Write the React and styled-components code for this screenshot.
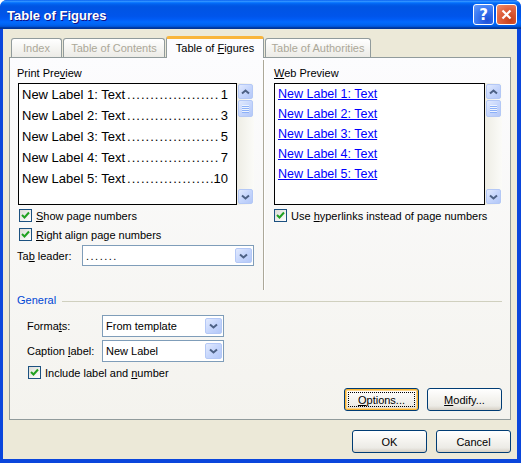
import styled, { createGlobalStyle } from "styled-components"

const GlobalStyle = createGlobalStyle`
  body {
    margin: 0;
    background: #ffffff;
    font-family: "Liberation Sans", Arial, sans-serif;
    font-size: 11px;
  }
`

const Window = styled.div`
  width: 521px;
  height: 463px;
  display: flex;
  flex-direction: column;
  background: #0a46dc;
  border-radius: 7px 7px 0 0;
  overflow: hidden;
`

const TitleBar = styled.div`
  height: 29px;
  flex: none;
  display: flex;
  align-items: center;
  padding: 0 4px 0 7px;
  background: linear-gradient(
    to bottom,
    #0058ee 0%,
    #3593ff 4%,
    #288eff 6%,
    #127dff 8%,
    #036ffc 10%,
    #0262ee 14%,
    #0057e5 20%,
    #0054e3 24%,
    #0055eb 56%,
    #005bf5 66%,
    #026afe 76%,
    #0062ef 86%,
    #0052d6 92%,
    #0040ab 94%,
    #003092 100%
  );
`

const Title = styled.div`
  flex: 1;
  color: #ffffff;
  font-weight: bold;
  font-size: 13px;
  text-shadow: 1px 1px 0 #0f1089;
  margin-top: 1px;
`

const CaptionButton = styled.div`
  width: 21px;
  height: 21px;
  box-sizing: border-box;
  border: 1px solid #ffffff;
  border-radius: 3px;
  margin-left: 2px;
  display: flex;
  align-items: center;
  justify-content: center;
  color: #ffffff;
  font-family: "DejaVu Sans", sans-serif;
  font-weight: bold;
  font-size: 15px;
  background: ${(p) =>
    p.$close
      ? "radial-gradient(circle at 70% 80%, #c8401a 0%, #e0623f 55%, #f0906c 100%)"
      : "radial-gradient(circle at 70% 80%, #1c4fd8 0%, #3d7cf4 60%, #6a9cf8 100%)"};
`

const Client = styled.div`
  flex: 1;
  margin: 0 4px 4px 3px;
  background: #ece9d8;
  padding: 7px 6px 0 6px;
  display: flex;
  flex-direction: column;
`

const TabRow = styled.div`
  height: 22px;
  display: flex;
  align-items: flex-end;
  gap: 1px;
  padding-left: 2px;
  margin-bottom: -1px;
  position: relative;
  z-index: 1;
`

const Tab = styled.div`
  width: ${(p) => p.$w}px;
  box-sizing: border-box;
  height: ${(p) => (p.$active ? 22 : 19)}px;
  margin-bottom: ${(p) => (p.$active ? 0 : 1)}px;
  border: 1px solid #919b9c;
  border-bottom: none;
  border-top: ${(p) => (p.$active ? "3px solid #f9b53b" : "1px solid #919b9c")};
  border-radius: 3px 3px 0 0;
  background: ${(p) =>
    p.$active ? "#fcfcfe" : "linear-gradient(#ffffff, #ecebe6)"};
  color: ${(p) => (p.$active ? "#000000" : "#aca899")};
  display: flex;
  align-items: center;
  justify-content: center;
  white-space: nowrap;
  padding-bottom: ${(p) => (p.$active ? 1 : 0)}px;
`

const Panel = styled.div`
  height: 363px;
  box-sizing: border-box;
  border: 1px solid #919b9c;
  background: linear-gradient(#fcfcfe, #f4f3ee);
  padding: 2px 8px 0 7px;
  display: flex;
  flex-direction: column;
`

const TopSection = styled.div`
  height: 230px;
  display: grid;
  grid-template-columns: 237px 1fr;
  column-gap: 9px;
`

const Column = styled.div`
  display: flex;
  flex-direction: column;
  ${(p) =>
    p.$divided &&
    `
    border-left: 1px solid #aca899;
    box-shadow: inset 1px 0 0 #ffffff;
    padding-left: 10px;
  `}
`

const FieldLabel = styled.div`
  margin-top: 7px;
  margin-bottom: 3px;
  line-height: 13px;
  color: #000000;
`

const PreviewWrap = styled.div`
  height: 122px;
  display: flex;
  margin-left: ${(p) => p.$inset || 0}px;
`

const PreviewBox = styled.div`
  flex: 1;
  min-width: 0;
  box-sizing: border-box;
  border: 1px solid #000000;
  background: #ffffff;
  padding: 0 8px 0 3px;
  overflow: hidden;
`

const PrintLine = styled.div`
  display: flex;
  line-height: 21px;
  font-size: 13px;
  color: #000000;
  white-space: nowrap;
`

const Leader = styled.span`
  flex: 1;
  min-width: 0;
  text-align: right;
  margin-left: 2px;
  letter-spacing: 1px;
`

const PageNum = styled.span`
  padding-left: ${(p) => (p.$pad ? 2 : 0)}px;
`

const WebLink = styled.div`
  line-height: 20px;
  font-size: 12.5px;
  color: #0000ff;
  text-decoration: underline;
  white-space: nowrap;
`

const ScrollBar = styled.div`
  width: 17px;
  flex: none;
  display: flex;
  flex-direction: column;
  align-items: center;
  padding: 1px 0;
  box-sizing: border-box;
  gap: 1px;
  background: linear-gradient(to right, #eeede5, #fbfbf8);
`

const ScrollButton = styled.div`
  width: 15px;
  height: ${(p) => p.$h || 15}px;
  box-sizing: border-box;
  border: 1px solid #b4c8f6;
  border-radius: 2px;
  background: linear-gradient(135deg, #e2eafe 0%, #c6d6fc 50%, #b4c8f8 100%);
  display: flex;
  align-items: center;
  justify-content: center;
  margin-top: ${(p) => (p.$bottom ? "auto" : "0")};
`

const CheckRow = styled.div`
  height: 19px;
  display: flex;
  align-items: center;
  margin-top: ${(p) => p.$mt || 0}px;
  padding-left: ${(p) => p.$indent || 0}px;
  color: #000000;
  white-space: nowrap;
`

const Box = styled.span`
  width: 13px;
  height: 13px;
  box-sizing: border-box;
  border: 1px solid #1c5180;
  background: linear-gradient(135deg, #dcdcd7, #ffffff);
  margin-right: 4px;
  display: flex;
  align-items: center;
  justify-content: center;
`

const LabeledRow = styled.div`
  display: flex;
  align-items: center;
  margin-top: ${(p) => p.$mt || 0}px;
  padding-left: ${(p) => p.$indent || 0}px;
`

const RowLabel = styled.div`
  width: ${(p) => p.$w}px;
  flex: none;
  color: #000000;
`

const Combo = styled.div`
  width: ${(p) => p.$w}px;
  height: ${(p) => p.$h || 21}px;
  box-sizing: border-box;
  border: 1px solid #7f9db9;
  background: #ffffff;
  display: flex;
  align-items: center;
  padding: 2px 1px 2px 3px;
  color: #000000;
`

const ComboText = styled.span`
  flex: 1;
  letter-spacing: ${(p) => (p.$spaced ? "1.5px" : "normal")};
`

const ComboButton = styled.div`
  width: 17px;
  align-self: stretch;
  box-sizing: border-box;
  border: 1px solid #b4c8f6;
  border-radius: 2px;
  background: linear-gradient(135deg, #e2eafe 0%, #c6d6fc 50%, #b4c8f8 100%);
  display: flex;
  align-items: center;
  justify-content: center;
`

const GroupHeader = styled.div`
  display: flex;
  align-items: center;
  margin-top: 4px;
  line-height: 13px;
  color: #0046d5;
`

const GroupLine = styled.div`
  flex: 1;
  height: 1px;
  background: #d0d0bf;
  margin-left: 6px;
  margin-top: 1px;
`

const ButtonRow = styled.div`
  display: flex;
  justify-content: flex-end;
  gap: ${(p) => p.$gap}px;
  margin-top: ${(p) => p.$mt}px;
`

const Button = styled.div`
  width: 75px;
  height: 23px;
  box-sizing: border-box;
  border: 1px solid #003c74;
  border-radius: 3px;
  background: linear-gradient(#ffffff 0%, #f5f4f0 45%, #ecebe6 80%, #d6d0c5 100%);
  display: flex;
  align-items: center;
  justify-content: center;
  color: #000000;
  position: relative;
  ${(p) =>
    p.$focus &&
    `
    box-shadow: inset 0 0 0 1px #f8b330, inset 0 0 0 2px #fcd58a;
    &::after {
      content: "";
      position: absolute;
      inset: 3px;
      border: 1px dotted #000000;
    }
  `}
`

const Chevron = ({ down }) => (
  <svg width="9" height="6" viewBox="0 0 9 6">
    <path
      d={down ? "M1 1.5 L4.5 4.5 L8 1.5" : "M1 4.5 L4.5 1.5 L8 4.5"}
      fill="none"
      stroke="#4d6185"
      strokeWidth="2"
    />
  </svg>
)

const Grip = () => (
  <svg width="7" height="8" viewBox="0 0 7 8">
    {[0, 2, 4, 6].map((y) => (
      <g key={y}>
        <rect x="0" y={y} width="7" height="1" fill="#eef4fe" />
        <rect x="0" y={y + 1} width="7" height="1" fill="#8cb0f8" />
      </g>
    ))}
  </svg>
)

const Check = () => (
  <svg width="9" height="9" viewBox="0 0 9 9">
    <path d="M1 4 L3.5 6.5 L8 1.5" fill="none" stroke="#21a121" strokeWidth="2" />
  </svg>
)

function Scroller() {
  return (
    <ScrollBar>
      <ScrollButton>
        <Chevron />
      </ScrollButton>
      <ScrollButton $h={17}>
        <Grip />
      </ScrollButton>
      <ScrollButton $bottom>
        <Chevron down />
      </ScrollButton>
    </ScrollBar>
  )
}

function CheckBox({ children, ...rest }) {
  return (
    <CheckRow {...rest}>
      <Box>
        <Check />
      </Box>
      {children}
    </CheckRow>
  )
}

const printItems = [
  ["New Label 1: Text", "1"],
  ["New Label 2: Text", "3"],
  ["New Label 3: Text", "5"],
  ["New Label 4: Text", "7"],
  ["New Label 5: Text", "10"],
]

export default function App() {
  return (
    <>
      <GlobalStyle />
      <Window>
        <TitleBar>
          <Title>Table of Figures</Title>
          <CaptionButton>?</CaptionButton>
          <CaptionButton $close>
            <svg width="11" height="11" viewBox="0 0 11 11">
              <path d="M1.5 1.5 L9.5 9.5 M9.5 1.5 L1.5 9.5" stroke="#ffffff" strokeWidth="2.2" />
            </svg>
          </CaptionButton>
        </TitleBar>
        <Client>
          <TabRow>
            <Tab $w={51}>Index</Tab>
            <Tab $w={102}>Table of Contents</Tab>
            <Tab $w={98} $active>
              <span>
                Table of <u>F</u>igures
              </span>
            </Tab>
            <Tab $w={106}>Table of Authorities</Tab>
          </TabRow>
          <Panel>
            <TopSection>
              <Column>
                <FieldLabel>
                  Print Pre<u>v</u>iew
                </FieldLabel>
                <PreviewWrap $inset={1}>
                  <PreviewBox>
                    {printItems.map(([label, page]) => (
                      <PrintLine key={label}>
                        <span>{label}</span>
                        <Leader>{".".repeat(page.length === 1 ? 20 : 19)}</Leader>
                        <PageNum $pad={page.length === 1}>{page}</PageNum>
                      </PrintLine>
                    ))}
                  </PreviewBox>
                  <Scroller />
                </PreviewWrap>
                <CheckBox $mt={1} $indent={2}>
                  <span>
                    <u>S</u>how page numbers
                  </span>
                </CheckBox>
                <CheckBox $indent={2}>
                  <span>
                    <u>R</u>ight align page numbers
                  </span>
                </CheckBox>
                <LabeledRow $mt={1}>
                  <RowLabel $w={65}>
                    Ta<u>b</u> leader:
                  </RowLabel>
                  <Combo $w={172}>
                    <ComboText $spaced>.......</ComboText>
                    <ComboButton>
                      <Chevron down />
                    </ComboButton>
                  </Combo>
                </LabeledRow>
              </Column>
              <Column $divided>
                <FieldLabel>
                  <u>W</u>eb Preview
                </FieldLabel>
                <PreviewWrap>
                  <PreviewBox>
                    {printItems.map(([label]) => (
                      <WebLink key={label}>{label}</WebLink>
                    ))}
                  </PreviewBox>
                  <Scroller />
                </PreviewWrap>
                <CheckBox $mt={1}>
                  <span>
                    Use <u>h</u>yperlinks instead of page numbers
                  </span>
                </CheckBox>
              </Column>
            </TopSection>
            <GroupHeader>
              General
              <GroupLine />
            </GroupHeader>
            <LabeledRow $mt={8} $indent={10}>
              <RowLabel $w={75}>
                Forma<u>t</u>s:
              </RowLabel>
              <Combo $w={122} $h={22}>
                <ComboText>From template</ComboText>
                <ComboButton>
                  <Chevron down />
                </ComboButton>
              </Combo>
            </LabeledRow>
            <LabeledRow $mt={3} $indent={10}>
              <RowLabel $w={75}>
                Caption <u>l</u>abel:
              </RowLabel>
              <Combo $w={122} $h={22}>
                <ComboText>New Label</ComboText>
                <ComboButton>
                  <Chevron down />
                </ComboButton>
              </Combo>
            </LabeledRow>
            <CheckBox $mt={1} $indent={11}>
              <span>
                Include label and <u>n</u>umber
              </span>
            </CheckBox>
            <ButtonRow $gap={8} $mt={6}>
              <Button $focus>
                <span>
                  <u>O</u>ptions...
                </span>
              </Button>
              <Button>
                <span>
                  <u>M</u>odify...
                </span>
              </Button>
            </ButtonRow>
          </Panel>
          <ButtonRow $gap={9} $mt={10}>
            <Button>OK</Button>
            <Button>Cancel</Button>
          </ButtonRow>
        </Client>
      </Window>
    </>
  )
}
